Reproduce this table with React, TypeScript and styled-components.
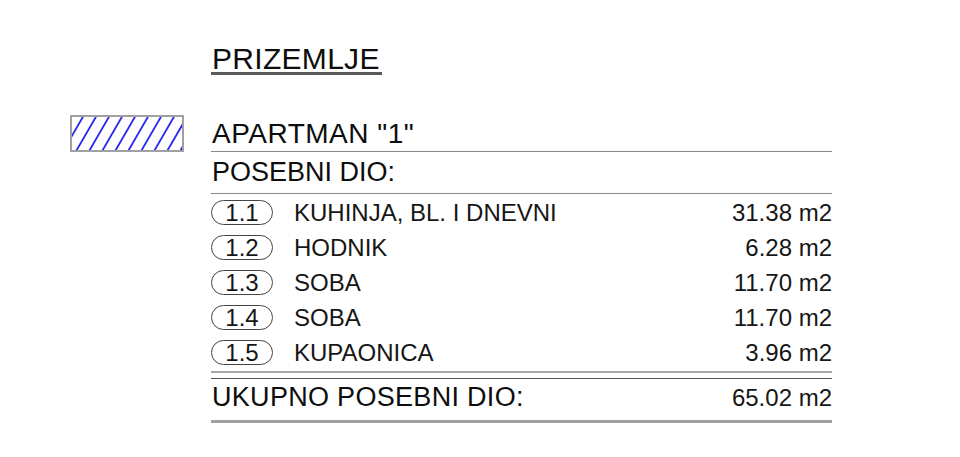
import React, { FC } from "react";
import styled, { createGlobalStyle } from "styled-components";

interface Room {
	id: string;
	name: string;
	area: string;
}

const ROOMS: Room[] = [
	{ id: "1.1", name: "KUHINJA, BL. I DNEVNI", area: "31.38 m2" },
	{ id: "1.2", name: "HODNIK", area: "6.28 m2" },
	{ id: "1.3", name: "SOBA", area: "11.70 m2" },
	{ id: "1.4", name: "SOBA", area: "11.70 m2" },
	{ id: "1.5", name: "KUPAONICA", area: "3.96 m2" },
];

const GlobalStyle = createGlobalStyle`
	html, body {
		margin: 0;
		padding: 0;
		background: #ffffff;
	}
	body {
		font-family: "Liberation Sans", Arial, sans-serif;
		color: #0d0d0d;
	}
`;

const Hatch: FC = () => {
	// diagonal blue lines of the legend swatch
	const lines = [];
	for (let i = -3; i < 11; i++) {
		const x = 3 + i * 13;
		lines.push(<line key={i} x1={x} y1={36} x2={x + 22} y2={-2} />);
	}
	return (
		<svg width="110" height="33" viewBox="0 0 110 33">
			<g stroke="#2626f0" strokeWidth="1.8">
				{lines}
			</g>
		</svg>
	);
};

const App: FC = () => {
	return (
		<>
			<GlobalStyle />
			<StyledPage>
				<Title>PRIZEMLJE</Title>
				<Legend>
					<Hatch />
				</Legend>
				<Table>
					<Heading>APARTMAN "1"</Heading>
					<SubHeading>POSEBNI DIO:</SubHeading>
					<Rows>
						{ROOMS.map((room) => (
							<Row key={room.id}>
								<Pill>{room.id}</Pill>
								<span>{room.name}</span>
								<Area>{room.area}</Area>
							</Row>
						))}
					</Rows>
					<DoubleRule />
					<Total>
						<TotalLabel>UKUPNO POSEBNI DIO:</TotalLabel>
						<Area>65.02 m2</Area>
					</Total>
				</Table>
			</StyledPage>
		</>
	);
};

const StyledPage = styled.div`
	display: grid;
	grid-template-columns: 70px 114px 27px 621px;
	grid-template-rows: auto auto;
	row-gap: 40px;
	padding-top: 46px;
	width: 960px;
	height: 457px;
	box-sizing: border-box;
	align-content: start;
`;

const Title = styled.div`
	grid-column: 4;
	grid-row: 1;
	justify-self: start;
	font-size: 30px;
	line-height: 26px;
	letter-spacing: 0.3px;
	padding-left: 1px;
	padding-right: 2px;
	border-bottom: 3px solid #5a5a5a;
`;

const Legend = styled.div`
	grid-column: 2;
	grid-row: 2;
	align-self: start;
	width: 114px;
	height: 37px;
	box-sizing: border-box;
	border: 2px solid #a0a0a0;
	display: flex;
	overflow: hidden;
`;

const Table = styled.div`
	grid-column: 4;
	grid-row: 2;
	display: flex;
	flex-direction: column;
	padding-top: 4px;
`;

const Heading = styled.div`
	font-size: 28px;
	line-height: 30px;
	letter-spacing: 0.5px;
	padding-left: 1px;
	padding-bottom: 2px;
	border-bottom: 1px solid #8a8a8a;
`;

const SubHeading = styled.div`
	font-size: 27px;
	line-height: 28px;
	padding-left: 1px;
	padding-top: 6px;
	padding-bottom: 7px;
	border-bottom: 1px solid #8a8a8a;
`;

const Rows = styled.div`
	display: flex;
	flex-direction: column;
	padding-top: 1px;
`;

const Row = styled.div`
	display: grid;
	grid-template-columns: 62px 1fr auto;
	column-gap: 21px;
	align-items: center;
	height: 35px;
	font-size: 24px;
	color: #161616;
`;

const Pill = styled.div`
	height: 25px;
	box-sizing: border-box;
	border: 1px solid #444;
	border-radius: 13px;
	display: flex;
	align-items: center;
	justify-content: center;
	font-size: 24px;
	line-height: 1;
	padding-top: 1px;
`;

const Area = styled.span`
	font-size: 24px;
	text-align: right;
	color: #161616;
`;

const DoubleRule = styled.div`
	margin-top: 1px;
	height: 5px;
	border-top: 2px solid #a8a8a8;
	border-bottom: 1px solid #555;
`;

const Total = styled.div`
	display: flex;
	justify-content: space-between;
	align-items: baseline;
	padding-top: 3px;
	padding-bottom: 7px;
	line-height: 30px;
	border-bottom: 3px solid #a0a0a0;
`;

const TotalLabel = styled.span`
	font-size: 27px;
	letter-spacing: 0.3px;
	padding-left: 1px;
`;

export default App;
